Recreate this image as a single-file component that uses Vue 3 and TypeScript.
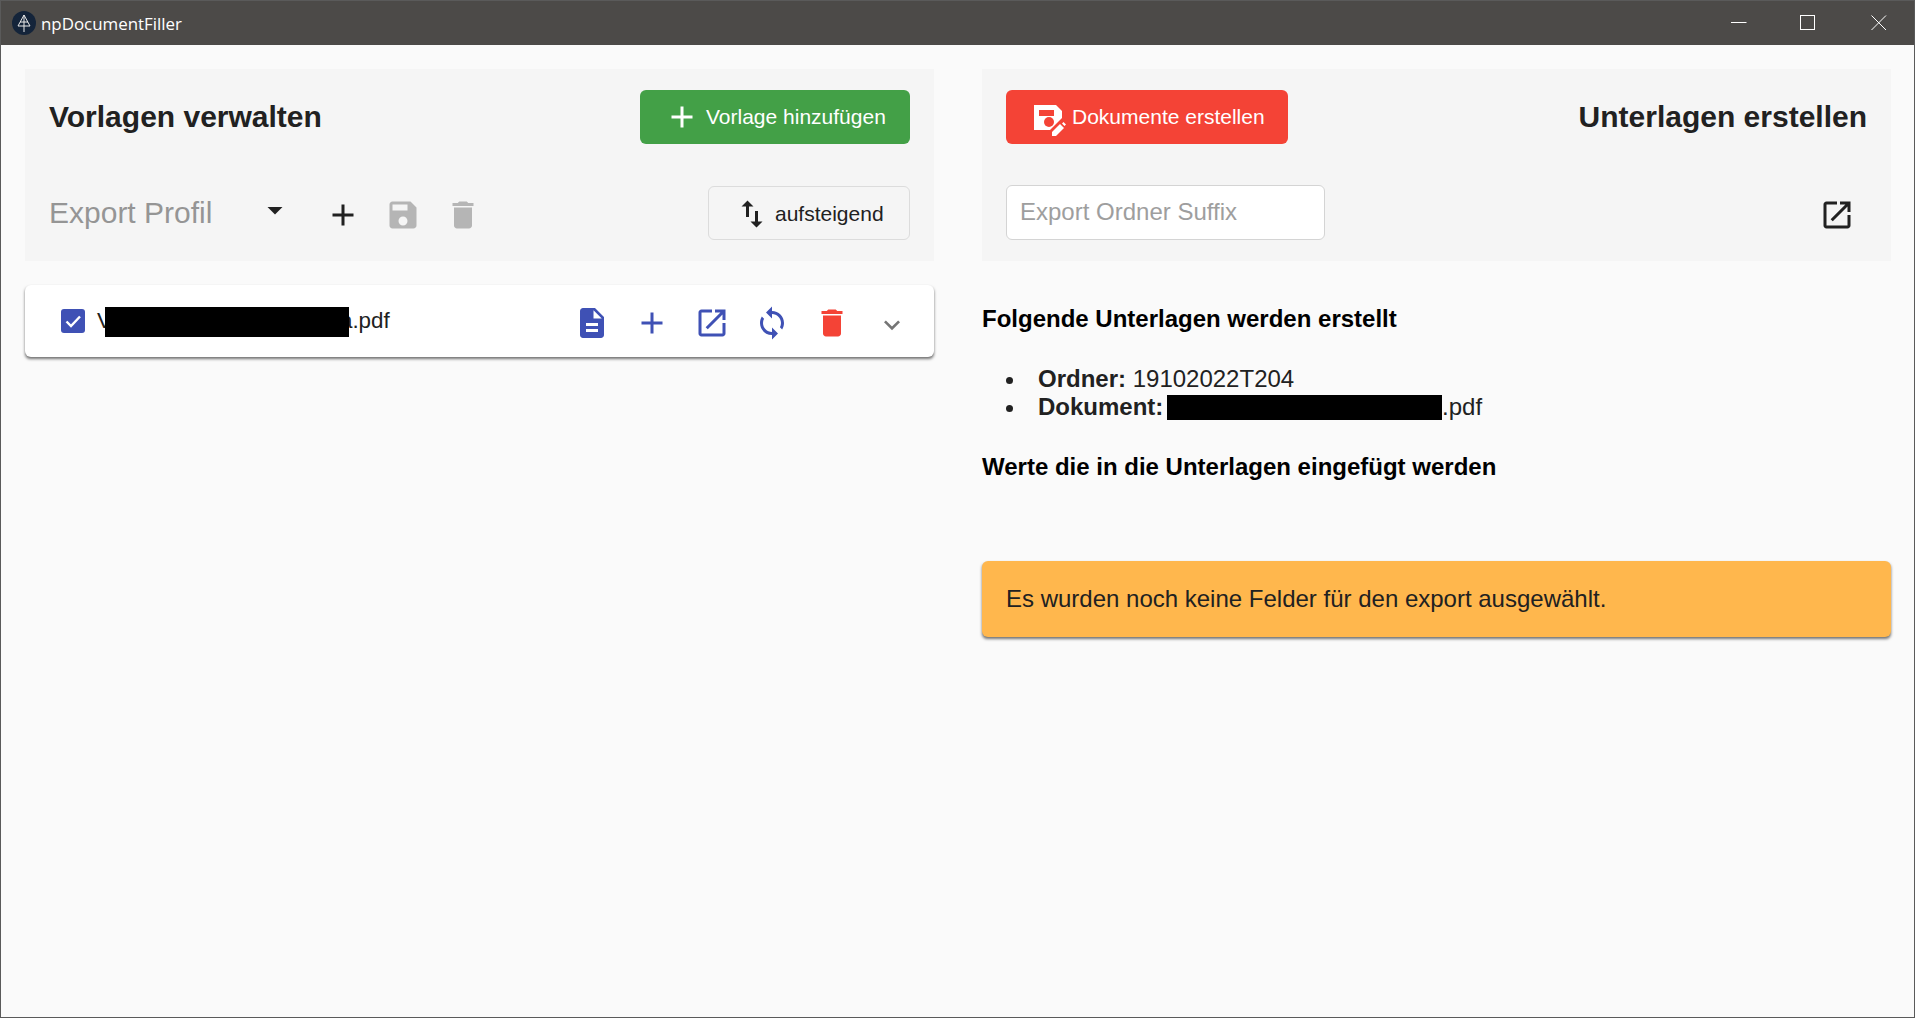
<script setup lang="ts">
const icons = {
  add: 'M19 13h-6v6h-2v-6H5v-2h6V5h2v6h6v2z',
  save: 'M17 3H5c-1.11 0-2 .9-2 2v14c0 1.1.89 2 2 2h14c1.1 0 2-.9 2-2V7l-4-4zm-5 16c-1.66 0-3-1.34-3-3s1.34-3 3-3 3 1.34 3 3-1.34 3-3 3zm3-10H5V5h10v4z',
  trash: 'M6 19c0 1.1.9 2 2 2h8c1.1 0 2-.9 2-2V7H6v12zM19 4h-3.5l-1-1h-5l-1 1H5v2h14V4z',
  drop: 'M7 10l5 5 5-5z',
  swap: 'M16 17.01V10h-2v7.01h-3L15 21l4-3.99h-3zM9 3L5 6.99h3V14h2V6.99h3L9 3z',
  launch: 'M19 19H5V5h7V3H5c-1.11 0-2 .9-2 2v14c0 1.1.89 2 2 2h14c1.1 0 2-.9 2-2v-7h-2v7zM14 3v2h3.59l-9.83 9.83 1.41 1.41L19 6.41V10h2V3h-7z',
  file: 'M14 2H6c-1.1 0-1.99.9-1.99 2L4 20c0 1.1.89 2 1.99 2H18c1.1 0 2-.9 2-2V8l-6-6zm2 16H8v-2h8v2zm0-4H8v-2h8v2zm-3-5V3.5L18.5 9H13z',
  sync: 'M12 4V1L8 5l4 4V6c3.31 0 6 2.69 6 6 0 1.01-.25 1.97-.7 2.8l1.46 1.46C19.54 15.03 20 13.57 20 12c0-4.42-3.58-8-8-8zm0 14c-3.31 0-6-2.69-6-6 0-1.01.25-1.97.7-2.8L5.24 7.74C4.46 8.97 4 10.43 4 12c0 4.42 3.58 8 8 8v3l4-4-4-4v3z',
  chevron: 'M16.59 8.59L12 13.17 7.41 8.59 6 10l6 6 6-6z',
}

const rowActions = [
  { path: icons.file, color: '#3f51b5' },
  { path: icons.add, color: '#3f51b5' },
  { path: icons.launch, color: '#3f51b5' },
  { path: icons.sync, color: '#3f51b5' },
  { path: icons.trash, color: '#f44336' },
]
</script>

<template>
  <div class="window">
    <header class="titlebar">
      <svg class="titlebar__logo" viewBox="0 0 24 24">
        <circle cx="12" cy="12" r="12" fill="#14243a" />
        <path d="M12 4 L18 15 H6 Z M12 4 V21 M8 11 H16" fill="none" stroke="#e8e8e8" stroke-width="1" />
      </svg>
      <span class="titlebar__title">npDocumentFiller</span>
      <div class="titlebar__controls">
        <svg viewBox="0 0 16 16"><path d="M0 7.5 H15.5" stroke="#fff" fill="none" /></svg>
        <svg viewBox="0 0 16 16"><rect x="0.5" y="0.5" width="14" height="14" stroke="#fff" fill="none" /></svg>
        <svg viewBox="0 0 16 16"><path d="M0.5 0.5 L15 15 M15 0.5 L0.5 15" stroke="#fff" fill="none" /></svg>
      </div>
    </header>

    <main class="main">
      <section class="column">
        <div class="panel">
          <div class="panel__row">
            <h2 class="panel__title">Vorlagen verwalten</h2>
            <button class="btn btn--green">
              <svg class="icon" viewBox="0 0 24 24"><path :d="icons.add" /></svg>
              <span>Vorlage hinzufügen</span>
            </button>
          </div>
          <div class="panel__row">
            <div class="profile">
              <span class="profile__label">Export Profil</span>
              <svg class="icon profile__arrow" viewBox="0 0 24 24"><path :d="icons.drop" /></svg>
            </div>
            <div class="profile-actions">
              <svg class="icon icon--dark" viewBox="0 0 24 24"><path :d="icons.add" /></svg>
              <svg class="icon icon--muted" viewBox="0 0 24 24"><path :d="icons.save" /></svg>
              <svg class="icon icon--muted" viewBox="0 0 24 24"><path :d="icons.trash" /></svg>
            </div>
            <button class="btn btn--outlined">
              <svg class="icon icon--dark" viewBox="0 0 24 24"><path :d="icons.swap" /></svg>
              <span>aufsteigend</span>
            </button>
          </div>
        </div>

        <div class="template-row">
          <span class="checkbox">
            <svg viewBox="0 0 24 24"><path d="M5.5 12.5 L10 17 L19 7.5" fill="none" stroke="#fff" stroke-width="2.4" /></svg>
          </span>
          <span class="template-row__name">V<span class="redacted redacted--name"></span><span>a.pdf</span></span>
          <div class="template-row__actions">
            <span v-for="action in rowActions" :key="action.path" class="template-row__action">
              <svg class="icon" viewBox="0 0 24 24" :style="{ fill: action.color }"><path :d="action.path" /></svg>
            </span>
            <span class="template-row__action">
              <svg class="icon-chevron" viewBox="0 0 24 24"><path :d="icons.chevron" /></svg>
            </span>
          </div>
        </div>
      </section>

      <section class="column">
        <div class="panel">
          <div class="panel__row">
            <button class="btn btn--red">
              <svg class="icon-doc" viewBox="0 0 36 36">
                <path d="M2 2 H24 L30 8 V15 L18 27 H2 Z" fill="#fff" />
                <rect x="7" y="7" width="15" height="6" fill="#f44336" />
                <circle cx="17" cy="19" r="5" fill="#f44336" />
                <path d="M20 29 L28 21 L32 25 L24 33 H20 Z M30 20.5 L31.5 19 L34 21.5 L32.5 23 Z" fill="#fff" />
              </svg>
              <span>Dokumente erstellen</span>
            </button>
            <h2 class="panel__title">Unterlagen erstellen</h2>
          </div>
          <div class="panel__row">
            <input class="suffix" type="text" placeholder="Export Ordner Suffix" />
            <svg class="icon icon--dark icon--launch" viewBox="0 0 24 24"><path :d="icons.launch" /></svg>
          </div>
        </div>

        <h3 class="summary-title summary-title--first">Folgende Unterlagen werden erstellt</h3>
        <ul class="summary-list">
          <li><b>Ordner:</b> 19102022T204</li>
          <li><b>Dokument:</b> <span class="redacted redacted--doc"></span>.pdf</li>
        </ul>
        <h3 class="summary-title">Werte die in die Unterlagen eingefügt werden</h3>

        <div class="alert">Es wurden noch keine Felder für den export ausgewählt.</div>
      </section>
    </main>
  </div>
</template>

<style>
html,
body {
  margin: 0;
  height: 100%;
  overflow: hidden;
}
</style>

<style scoped>
.window {
  box-sizing: border-box;
  height: 100vh;
  border: 1px solid #5a5a5a;
  background: #fafafa;
  font-family: "Liberation Sans", Arial, sans-serif;
  color: #212121;
  display: flex;
  flex-direction: column;
}

.titlebar {
  height: 44px;
  flex: none;
  background: #4c4a48;
  display: flex;
  align-items: center;
  padding-left: 11px;
}

.titlebar__logo {
  width: 24px;
  height: 24px;
}

.titlebar__title {
  margin-left: 5px;
  color: #fff;
  font-family: "Open Sans", sans-serif;
  font-size: 16.9px;
}

.titlebar__controls {
  margin-left: auto;
  margin-right: 27px;
  display: flex;
  gap: 55px;
}

.titlebar__controls svg {
  width: 16px;
  height: 16px;
  display: block;
}

.titlebar__controls svg:first-child {
  margin-right: -2px;
}

.main {
  flex: 1;
  display: grid;
  grid-template-columns: 909px 909px;
  column-gap: 48px;
  padding: 24px 23px 0 24px;
}

.panel {
  height: 192px;
  box-sizing: border-box;
  background: #f5f5f5;
  padding: 21px 24px;
  display: flex;
  flex-direction: column;
  gap: 42px;
}

.panel__row {
  height: 54px;
  display: flex;
  align-items: center;
  justify-content: space-between;
}

.panel__title {
  margin: 0;
  font-size: 30px;
  font-weight: 700;
  color: #212121;
}

.icon {
  width: 36px;
  height: 36px;
  display: block;
  flex: none;
}

.icon--dark {
  fill: #212121;
}

.icon--muted {
  fill: #b5b5b5;
}

.icon--launch {
  margin-right: 12px;
  margin-top: 3px;
}

.btn {
  height: 54px;
  box-sizing: border-box;
  border: none;
  border-radius: 6px;
  display: flex;
  align-items: center;
  font-family: inherit;
  font-size: 21px;
  cursor: pointer;
}

.btn--green {
  width: 270px;
  padding: 0 0 0 24px;
  gap: 6px;
  background: #43a047;
  color: #fff;
  fill: #fff;
}

.btn--red {
  width: 282px;
  padding: 0 0 0 26px;
  gap: 4px;
  background: #f44336;
  color: #fff;
}

.icon-doc {
  width: 36px;
  height: 36px;
  flex: none;
  margin-top: 8px;
}

.btn--outlined {
  width: 202px;
  margin-left: auto;
  padding: 2px 0 0 25px;
  gap: 5px;
  background: transparent;
  border: 1px solid #dcdcdc;
  color: #212121;
}

.profile {
  width: 244px;
  display: flex;
  align-items: center;
  justify-content: space-between;
}

.profile__label {
  font-size: 30px;
  color: #959595;
}

.profile__arrow {
  fill: #212121;
  margin-top: -6px;
}

.profile-actions {
  margin-left: 20px;
  display: flex;
  margin-top: 3px;
}

.profile-actions .icon {
  padding: 0 12px;
}

.template-row {
  margin-top: 24px;
  height: 72px;
  box-sizing: border-box;
  background: #fff;
  border-radius: 6px;
  box-shadow: 0 2px 3px -0.5px rgba(0, 0, 0, 0.55);
  padding: 0 12px 0 36px;
  display: flex;
  align-items: center;
}

.checkbox {
  width: 24px;
  height: 24px;
  border-radius: 3px;
  background: #3f51b5;
  display: block;
}

.checkbox svg {
  width: 24px;
  height: 24px;
  display: block;
}

.template-row__name {
  margin-left: 12px;
  margin-top: -1px;
  font-size: 22.4px;
  display: flex;
  align-items: center;
}

.redacted {
  background: #000;
  position: relative;
  z-index: 1;
}

.redacted--name {
  width: 244px;
  height: 30px;
  margin: 2px -9px 0 -7px;
}

.redacted--doc {
  display: inline-block;
  width: 275px;
  height: 25px;
  margin-left: -3px;
  vertical-align: -5px;
}

.template-row__actions {
  margin-left: auto;
  margin-top: 4px;
  display: flex;
}

.template-row__action {
  width: 60px;
  height: 36px;
  display: flex;
  align-items: center;
  justify-content: center;
}

.icon-chevron {
  width: 32px;
  height: 32px;
  fill: #757575;
  margin-top: 3px;
}

.suffix {
  box-sizing: border-box;
  width: 319px;
  height: 55px;
  margin-top: -2px;
  padding: 0 13px;
  background: #fff;
  border: 1px solid #d4d4d4;
  border-radius: 6px;
  font-family: inherit;
  font-size: 24px;
  outline: none;
}

.suffix::placeholder {
  color: #9e9e9e;
  opacity: 1;
}

.summary-title {
  margin: 32px 0 0;
  font-size: 24px;
  line-height: 28px;
  font-weight: 700;
  color: #000;
}

.summary-title--first {
  margin-top: 44px;
}

.summary-list {
  margin: 32px 0 0;
  padding-left: 56px;
  font-size: 24px;
  line-height: 28px;
  list-style: none;
}

.summary-list li {
  position: relative;
}

.summary-list li::before {
  content: "";
  position: absolute;
  left: -32px;
  top: 12px;
  width: 7px;
  height: 7px;
  border-radius: 50%;
  background: #212121;
}

.alert {
  margin-top: 80px;
  height: 76px;
  box-sizing: border-box;
  padding: 0 24px;
  display: flex;
  align-items: center;
  background: #ffb74d;
  border-radius: 6px;
  box-shadow: 0 2px 3px -0.5px rgba(0, 0, 0, 0.55);
  font-size: 24px;
  color: #212121;
}
</style>
